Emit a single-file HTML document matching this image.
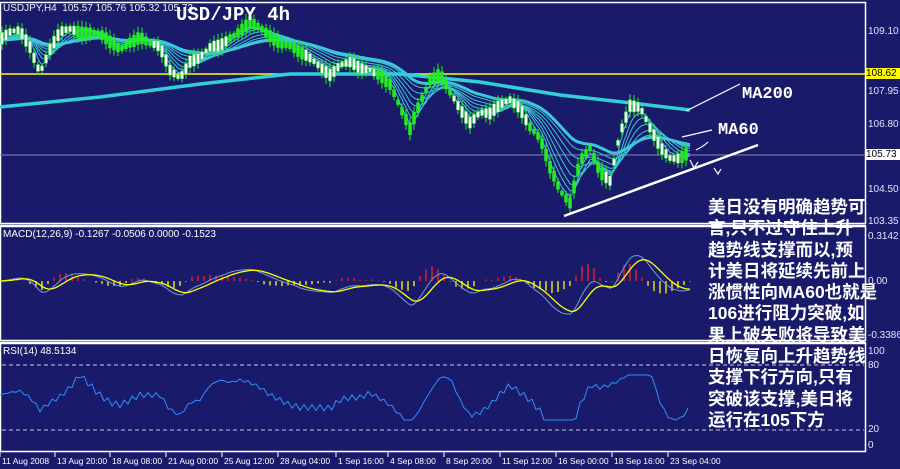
<!DOCTYPE html>
<html><head><meta charset="utf-8"><style>
body{margin:0;width:900px;height:469px;background:#1a1a6b;overflow:hidden;position:relative;font-family:"Liberation Sans",sans-serif}
.t{position:absolute;color:#fff;font-size:10px;white-space:nowrap}
.ax{position:absolute;left:868px;color:#dfe6ff;font-size:10px;line-height:11px}
#cn{position:absolute;left:708px;top:197px;color:#fff;font:bold 17.5px/21.3px "Liberation Sans","Noto Sans CJK SC",sans-serif;white-space:nowrap}
</style></head><body>
<svg id="s" width="900" height="469" style="position:absolute;left:0;top:0">
<g fill="none" stroke="#fff" stroke-width="1.5">
<rect x="0.5" y="2.5" width="865" height="221"/>
<line x1="0" y1="225.5" x2="866" y2="225.5"/>
<rect x="0.5" y="226.5" width="865" height="114"/>
<line x1="0" y1="342.5" x2="866" y2="342.5"/>
<rect x="0.5" y="343.5" width="865" height="108"/>
</g>
<line x1="0" y1="74" x2="865" y2="74" stroke="#ffff00" stroke-width="1.5"/>
<line x1="0" y1="155" x2="865" y2="155" stroke="#8888aa" stroke-width="1"/>
<line x1="2" y1="365" x2="864" y2="365" stroke="#c8c8e0" stroke-dasharray="4,3"/>
<line x1="2" y1="430" x2="864" y2="430" stroke="#c8c8e0" stroke-dasharray="4,3"/>
<g id="g"></g>
<g stroke="#fff" stroke-width="2.5"><line x1="564" y1="216" x2="758" y2="145"/></g>
<g stroke="#fff" stroke-width="1.2" fill="none"><line x1="686" y1="111" x2="740" y2="84"/><line x1="682" y1="137" x2="712" y2="130"/>
<path d="M690 160 l4 8 l4 -6 M696 150 q8 -4 12 -8 M714 168 l4 6 l3 -5"/></g>
</svg>
<div class="t" style="left:3px;top:3px;color:#eef">USDJPY,H4&nbsp; 105.57 105.76 105.32 105.73</div>
<div class="t" style="left:176px;top:4px;font:bold 19px 'Liberation Mono',monospace">USD/JPY 4h</div>
<div class="t" style="left:742px;top:85px;font:bold 17px 'Liberation Mono',monospace">MA200</div>
<div class="t" style="left:718px;top:121px;font:bold 17px 'Liberation Mono',monospace">MA60</div>
<div class="ax" style="top:26px">109.10</div>
<div class="ax" style="top:68px;background:#ffff00;color:#000;left:866px;width:34px">108.62</div>
<div class="ax" style="top:86px">107.95</div>
<div class="ax" style="top:119px">106.80</div>
<div class="ax" style="top:149px;background:#fff;color:#000;left:866px;width:34px">105.73</div>
<div class="ax" style="top:184px">104.50</div>
<div class="ax" style="top:216px">103.35</div>
<div class="ax" style="top:231px">0.3142</div>
<div class="ax" style="top:276px">0.00</div>
<div class="ax" style="top:330px">-0.3386</div>
<div class="ax" style="top:346px">100</div>
<div class="ax" style="top:360px">80</div>
<div class="ax" style="top:424px">20</div>
<div class="ax" style="top:440px">0</div>
<div class="t" style="left:3px;top:229px">MACD(12,26,9) -0.1267 -0.0506 0.0000 -0.1523</div>
<div class="t" style="left:3px;top:346px">RSI(14) 48.5134</div>
<div id="dates"></div>
<div id="cn">美日没有明确趋势可<br>言,只不过守住上升<br>趋势线支撑而以,预<br>计美日将延续先前上<br>涨惯性向MA60也就是<br>106进行阻力突破,如<br>果上破失败将导致美<br>日恢复向上升趋势线<br>支撑下行方向,只有<br>突破该支撑,美日将<br>运行在105下方</div>
<script>
var P=[40,35,32,45,70,50,35,30,30,30,35,45,50,40,35,45,50,70,75,60,60,50,45,35,30,25,30,35,40,45,55,60,65,72,65,65,70,68,72,85,110,130,100,78,75,95,110,120,110,115,108,100,105,125,140,170,190,200,160,150,175,180,130,105,110,130,145,155,158,155];
function y(x){var i=Math.min(Math.floor(x/10),P.length-2),f=x/10-i;return P[i]*(1-f)+P[i+1]*f;}
var ns="http://www.w3.org/2000/svg",g=document.getElementById('g');
function el(t,a){var e=document.createElementNS(ns,t);for(var k in a)e.setAttribute(k,a[k]);g.appendChild(e);return e;}
var pts=[];for(var x=0;x<=690;x+=2)pts.push([x,y(x)+Math.sin(x*1.7)*3]);
var per=[4,8,12,18,26,36,48,60];
per.forEach(function(p,j){var e=pts[0][1],s='';pts.forEach(function(q){e+=(q[1]-e)*2/(p+1);s+=q[0]+','+e.toFixed(1)+' ';});el('polyline',{points:s,fill:'none',stroke:'#3cc8d8','stroke-width':j==7?3:1});});
el('polyline',{points:'0,107 100,97 200,84 290,74 400,74 480,82 560,95 640,104 690,110',fill:'none',stroke:'#30d0d8','stroke-width':3.5});
for(var x=2;x<690;x+=4){var c=y(x)+Math.sin(x*1.7)*3,h=4+Math.abs(Math.sin(x*0.9))*8;el('line',{x1:x,y1:c-h,x2:x,y2:c+h,stroke:'#22ee22'});el('rect',{x:x-1.5,y:c-h/2,width:3,height:h,fill:(Math.sin(x*3.1)>0?'#22ee22':'#fff'),stroke:'#22ee22','stroke-width':.5});}
var e1=pts[0][1],e2=e1,sg=0,m=[],s1='',s2='';pts.forEach(function(q){e1+=(q[1]-e1)*2/13;e2+=(q[1]-e2)*2/27;var v=-(e1-e2);sg+=(v-sg)*2/10;m.push([q[0],v,sg]);});
m.forEach(function(a,i){if(i%3==0){var h=(a[1]-a[2])*2.5;el('line',{x1:a[0],y1:281,x2:a[0],y2:281-h,stroke:h>0?'#ff2020':'#ffff00','stroke-width':1.3});}s1+=a[0]+','+(281-a[1]*1.6)+' ';s2+=a[0]+','+(281-a[2]*1.6)+' ';});
el('polyline',{points:s1,fill:'none',stroke:'#6aa0d0'});el('polyline',{points:s2,fill:'none',stroke:'#ffff00','stroke-width':1.3});
var r='';pts.forEach(function(q,i){if(i%2==0){var v=395+(y(q[0])-y(Math.max(0,q[0]-40)))*0.5+Math.sin(q[0]*0.8)*3;r+=q[0]+','+Math.max(375,Math.min(420,v)).toFixed(1)+' ';}});
el('polyline',{points:r,fill:'none',stroke:'#2f8fff'});
var D=['11 Aug 2008','13 Aug 20:00','18 Aug 08:00','21 Aug 00:00','25 Aug 12:00','28 Aug 04:00','1 Sep 16:00','4 Sep 08:00','8 Sep 20:00','11 Sep 12:00','16 Sep 00:00','18 Sep 16:00','23 Sep 04:00'],X=[2,57,112,168,224,280,338,390,446,502,558,614,670],h='';
D.forEach(function(d,i){h+='<div class="t" style="left:'+X[i]+'px;top:456px;font-size:8.5px">'+d+'</div>';el('line',{x1:X[i]-2,y1:452,x2:X[i]-2,y2:457,stroke:'#fff'});});
document.getElementById('dates').innerHTML=h;
</script>
</body></html>
